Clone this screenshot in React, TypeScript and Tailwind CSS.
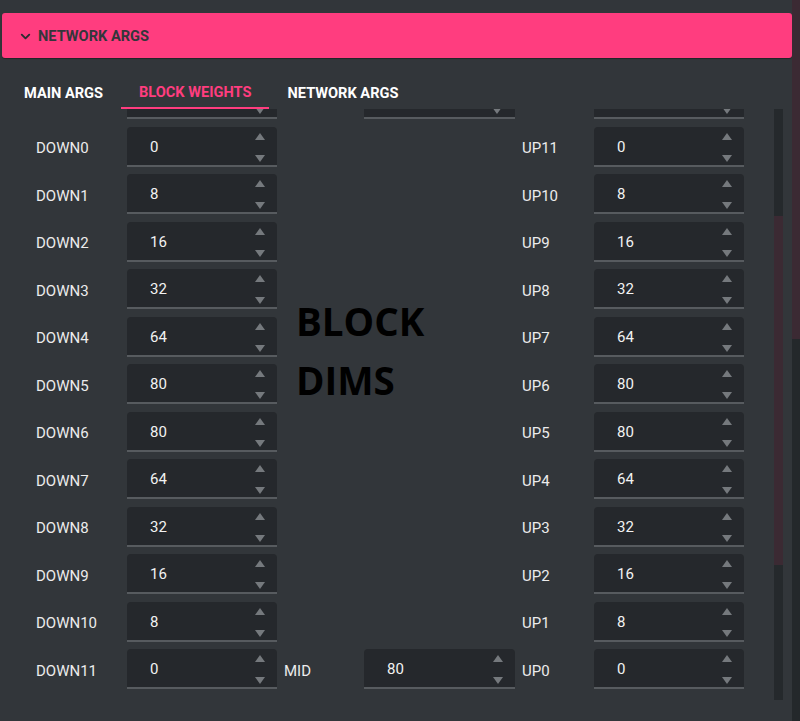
import { ChevronDown } from "lucide-react";

const leftRows = [
  ["DOWN0", "0"],
  ["DOWN1", "8"],
  ["DOWN2", "16"],
  ["DOWN3", "32"],
  ["DOWN4", "64"],
  ["DOWN5", "80"],
  ["DOWN6", "80"],
  ["DOWN7", "64"],
  ["DOWN8", "32"],
  ["DOWN9", "16"],
  ["DOWN10", "8"],
  ["DOWN11", "0"],
];

const rightRows = [
  ["UP11", "0"],
  ["UP10", "8"],
  ["UP9", "16"],
  ["UP8", "32"],
  ["UP7", "64"],
  ["UP6", "80"],
  ["UP5", "80"],
  ["UP4", "64"],
  ["UP3", "32"],
  ["UP2", "16"],
  ["UP1", "8"],
  ["UP0", "0"],
];

function Up() {
  return (
    <svg width="10" height="7" viewBox="0 0 10 7">
      <path d="M5 0 L10 7 L0 7 Z" fill="#75797d" />
    </svg>
  );
}

function Down() {
  return (
    <svg width="10" height="7" viewBox="0 0 10 7">
      <path d="M0 0 L10 0 L5 7 Z" fill="#75797d" />
    </svg>
  );
}

function NumBox({ value, width = "w-[150px]" }: { value: string; width?: string }) {
  return (
    <div
      className={`${width} h-[40px] shrink-0 rounded-t-[4px] bg-[#25282c] border-b-2 border-[#575b5f] flex items-center pl-[23px] text-[15px] text-[#f2f2f2]`}
    >
      <span className="pt-[3px]">{value}</span>
      <div className="ml-auto mr-[12px] h-full flex flex-col justify-between pt-[6px] pb-[3px]">
        <Up />
        <Down />
      </div>
    </div>
  );
}

function Row({ label, value, labelW, pad }: { label: string; value: string; labelW: string; pad: string }) {
  return (
    <div className="flex items-center h-[40px]">
      <div className={`${labelW} ${pad} pt-[4px] text-[15px] text-[#ececec]`}>{label}</div>
      <NumBox value={value} />
    </div>
  );
}

export default function App() {
  return (
    <div
      className="w-[800px] h-[721px] bg-[#32363a] flex overflow-hidden"
      style={{ fontFamily: "Roboto, 'Liberation Sans', sans-serif" }}
    >
      <div className="w-[792px] pt-[13px] pl-[2px] flex flex-col">
        <div className="h-[45px] rounded-[3px] bg-[#ff3d7f] shadow-[0_1px_1px_rgba(0,0,0,0.35)] flex items-center pl-[16px] pt-[2px] gap-[5px]">
          <ChevronDown size={15} strokeWidth={3} color="#2a2d31" />
          <span className="text-[14.6px] font-bold text-[#33363b]">NETWORK ARGS</span>
        </div>

        <div className="mt-[15px] flex pl-[4px] h-[36px]">
          <div className="px-[18px] pt-[5px] flex items-center text-[14.6px] font-bold text-white">MAIN ARGS</div>
          <div className="px-[18px] pt-[5px] flex items-center text-[14.6px] font-bold text-[#ff3d7f] border-b-2 border-[#ff3d7f]">
            BLOCK WEIGHTS
          </div>
          <div className="px-[18px] pt-[5px] flex items-center text-[14.6px] font-bold text-white">NETWORK ARGS</div>
        </div>

        <div className="flex">
          <div className="w-[772px] h-[591px] overflow-hidden">
            <div className="flex pl-[34px] -mt-[30px]">
              {/* left column */}
              <div className="w-[241px] flex flex-col gap-[7.5px]">
                <div className="pl-[91px]">
                  <NumBox value="" />
                </div>
                {leftRows.map(([l, v]) => (
                  <Row key={l} label={l} value={v} labelW="w-[91px]" pad="" />
                ))}
              </div>

              {/* middle column */}
              <div className="w-[238px] flex flex-col gap-[7.5px]">
                <div className="pl-[87px]">
                  <div className="w-[151px] h-[40px] rounded-t-[4px] bg-[#25282c] border-b-2 border-[#575b5f] flex items-end justify-end pr-[13px] pb-[3px]">
                    <Down />
                  </div>
                </div>
                <div className="h-[515px] pl-[19px] pt-[165px]">
                  <div
                    className="text-[38.5px] leading-[59px] font-bold text-black"
                    style={{ fontFamily: "'Open Sans', 'Noto Sans', sans-serif" }}
                  >
                    BLOCK
                    <br />
                    DIMS
                  </div>
                </div>
                <div className="flex items-center h-[40px]">
                  <div className="w-[87px] pl-[7px] pt-[4px] text-[15px] text-[#ececec]">MID</div>
                  <NumBox value="80" width="w-[151px]" />
                </div>
              </div>

              {/* right column */}
              <div className="w-[229px] flex flex-col gap-[7.5px]">
                <div className="pl-[79px]">
                  <NumBox value="" />
                </div>
                {rightRows.map(([l, v]) => (
                  <Row key={l} label={l} value={v} labelW="w-[79px]" pad="pl-[7px]" />
                ))}
              </div>
            </div>
          </div>
          <div className="w-[9px] h-[591px] bg-[#25292c] flex flex-col">
            <div className="h-[107px]" />
            <div className="h-[349px] bg-[#3b2a33]" />
          </div>
        </div>
      </div>

      <div className="w-[8px] h-full flex flex-col bg-[#24282b]">
        <div className="h-[339px] bg-[#3b2a33]" />
      </div>
    </div>
  );
}
